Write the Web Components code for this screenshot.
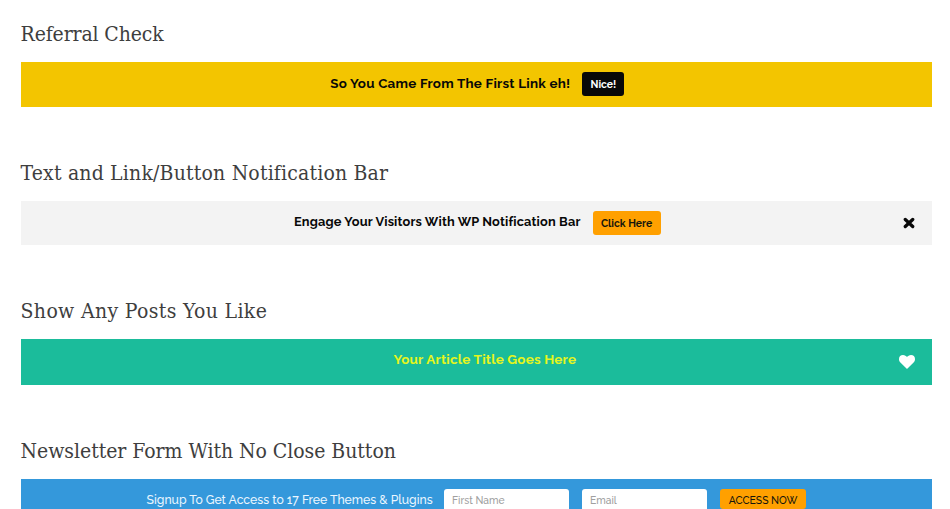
<!DOCTYPE html>
<html lang="en">
<head>
<meta charset="utf-8">
<title>Notification bars</title>
<style>
body { margin: 0; background: #fff; font-family: Raleway, Lato, sans-serif; }
</style>
</head>
<body>
<demo-page></demo-page>
<script>
const define = (name, html) => {
  const template = document.createElement('template');
  template.innerHTML = html;
  customElements.define(name, class extends HTMLElement {
    constructor() {
      super();
      this.attachShadow({ mode: 'open' }).append(template.content.cloneNode(true));
    }
  });
};

define('demo-section', `
<style>
:host { display: block; box-sizing: border-box; height: var(--section-height, 138.5px); }
h2 { margin: 0; height: 42px; font: 400 21px/28px "Roboto Slab", "DejaVu Serif Condensed", "DejaVu Serif", serif; font-stretch: condensed; color: #3e3e3e; letter-spacing: var(--heading-spacing, 0); white-space: nowrap; }
</style>
<h2><slot name="heading"></slot></h2><slot></slot>`);

define('notification-bar', `
<style>
:host { display: grid; grid-template-columns: 50px 1fr 50px; align-items: center; height: var(--bar-height, 44.5px); background: var(--bar-color); color: var(--bar-text, #080808); }
.content { grid-column: 2; display: flex; justify-content: center; align-items: center; gap: 12px; padding-left: var(--shift, 2px); white-space: nowrap; }
.icon { justify-self: center; display: flex; }
</style>
<div class="content"><slot></slot></div><div class="icon"><slot name="icon"></slot></div>`);

define('bar-title', `
<style>
:host { display: block; font-weight: 700; font-size: var(--title-size, 13.4px); letter-spacing: var(--title-spacing, .24px); line-height: 18px; padding-bottom: var(--lift, 3px); }
</style><slot></slot>`);

define('bar-button', `
<style>
:host { display: block; }
button { display: block; box-sizing: border-box; width: var(--w); height: var(--h, 24px); margin: 0; padding: 0; border: 0; border-radius: 3px; background: var(--button-color, #ffa000); color: var(--button-text, #16160c); font: var(--button-weight, 700) var(--button-size, 10.4px)/var(--line, 24px) Raleway, Lato, sans-serif; text-align: center; white-space: nowrap; }
</style><button type="button"><slot></slot></button>`);

define('form-field', `
<style>
:host { display: block; box-sizing: border-box; width: 125px; height: 20px; padding: 0 8px; border-radius: 3px 3px 0 0; background: #fff; color: #a0a0a0; font-size: 10.3px; font-weight: 500; line-height: 23px; }
</style><slot></slot>`);

define('newsletter-form', `
<style>
:host { display: flex; align-items: flex-start; box-sizing: border-box; height: 30px; overflow: hidden; padding: 10px 0 0 126px; background: #3498db; white-space: nowrap; }
.label { width: 286px; margin-right: 11.5px; color: #eaf6ff; font-size: 12.2px; font-weight: 500; line-height: 22px; }
form-field { margin-right: 13px; }
bar-button { --w: 86px; --h: 20px; --line: 22px; --button-weight: 500; --button-size: 10.4px; }
</style>
<span class="label">Signup To Get Access to 17 Free Themes &amp; Plugins</span>
<form-field>First Name</form-field><form-field>Email</form-field><bar-button>ACCESS NOW</bar-button>`);

define('close-icon', `
<style>:host { display: block; padding: 1px 0 0 3px; } svg { display: block; }</style>
<svg width="12" height="12" viewBox="0 0 12 12"><path d="M2.3 2.5 9.7 9.5M9.7 2.5 2.3 9.5" stroke="#080808" stroke-width="3.3" stroke-linecap="round"/></svg>`);

define('heart-icon', `
<style>:host, svg { display: block; }</style>
<svg width="16" height="14" viewBox="0 0 16 14"><path d="M8 14 1.4 7.5C0 6 0 4.7 0 4 0 1.5 1.6 0 4 0 5.8 0 7.2 1.1 8 2 8.8 1.1 10.2 0 12 0 14.4 0 16 1.5 16 4 16 4.7 16 6 14.6 7.5Z" fill="#fff"/></svg>`);

define('demo-page', `
<style>
:host { display: block; padding: 20px 18px 0 20.6px; }
</style>
<demo-section style="--heading-spacing:-.13px">
  <span slot="heading">Referral Check</span>
  <notification-bar style="--bar-color:#f3c500"><bar-title>So You Came From The First Link eh!</bar-title><bar-button style="--w:42px;--button-color:#080808;--button-text:#fff">Nice!</bar-button></notification-bar>
</demo-section>
<demo-section style="--heading-spacing:.18px;--section-height:138.5px">
  <span slot="heading">Text and Link/Button Notification Bar</span>
  <notification-bar style="--bar-color:#f3f3f3"><bar-title style="--title-size:12.8px;--title-spacing:.16px;--lift:2px">Engage Your Visitors With WP Notification Bar</bar-title><bar-button style="--w:68px">Click Here</bar-button><close-icon slot="icon"></close-icon></notification-bar>
</demo-section>
<demo-section style="--section-height:140px;--heading-spacing:.34px">
  <span slot="heading">Show Any Posts You Like</span>
  <notification-bar style="--bar-color:#1bbc9b;--bar-height:46px;--bar-text:#e6f51c;--shift:17px"><bar-title style="--lift:6px">Your Article Title Goes Here</bar-title><heart-icon slot="icon"></heart-icon></notification-bar>
</demo-section>
<demo-section style="--heading-spacing:-.04px;--section-height:72px">
  <span slot="heading">Newsletter Form With No Close Button</span>
  <newsletter-form></newsletter-form>
</demo-section>`);
</script>
</body>
</html>
